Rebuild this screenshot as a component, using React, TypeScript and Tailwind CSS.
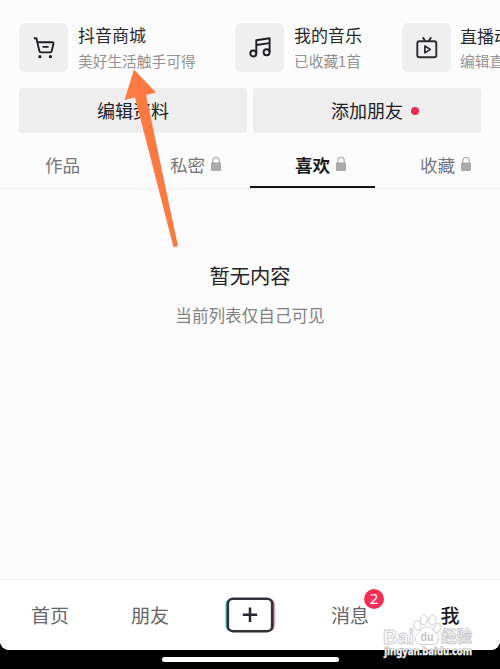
import React from "react";

function CartIcon() {
  return (
    <svg width="24" height="24" viewBox="0 0 24 24" fill="none" stroke="#1d1d22" strokeWidth="1.9" strokeLinecap="round" strokeLinejoin="round">
      <path d="M2.6 2.2H4.4l.9 3.9 2.1 8.9c.2 1 .7 1.4 1.6 1.4h9.1c.9 0 1.4-.4 1.6-1.3l1.7-7.3c.2-1-.2-1.6-1.2-1.6H5.3" />
      <path d="M11.1 10.9h4.9" strokeWidth="1.6" />
      <circle cx="7.9" cy="20.7" r="1.6" fill="#1d1d22" stroke="none" />
      <circle cx="18.4" cy="20.7" r="1.6" fill="#1d1d22" stroke="none" />
    </svg>
  );
}

function MusicIcon() {
  return (
    <svg width="24" height="24" viewBox="0 0 24 24" fill="none" stroke="#1d1d22" strokeWidth="1.9" strokeLinejoin="round">
      <circle cx="5.3" cy="17.5" r="3" />
      <circle cx="18.6" cy="16.3" r="3" />
      <path d="M8.3 17.5V4.2L21.6 2.3v14M8.3 9l13.3-1.9" />
    </svg>
  );
}

function LiveIcon() {
  return (
    <svg width="24" height="24" viewBox="0 0 24 24" fill="none" stroke="#2b2b31" strokeWidth="1.9" strokeLinecap="round" strokeLinejoin="round">
      <rect x="2.3" y="5.3" width="19" height="16" rx="2" />
      <path d="M8.1 1.9l2 2.8M15.8 1.9l-2 2.8" />
      <path d="M9.9 10v6.8l5.4-3.4z" strokeWidth="1.7" />
    </svg>
  );
}

function Lock() {
  return (
    <svg width="12" height="16" viewBox="0 0 12 16" fill="none">
      <path d="M2.8 7V4.6a3.2 3.2 0 0 1 6.4 0V7" stroke="#b4b4b6" strokeWidth="1.4" />
      <rect x="1" y="6.5" width="10" height="8.5" rx="0.9" fill="#aaaaac" />
    </svg>
  );
}

function Entry({ icon, title, sub, width, tight }: { icon: React.ReactNode; title: string; sub: string; width: string; tight?: boolean }) {
  return (
    <div className={"flex shrink-0 " + width}>
      <div className="flex h-[49px] w-[49px] shrink-0 items-center justify-center rounded-md bg-[#f0eff0]">{icon}</div>
      <div className={"whitespace-nowrap " + (tight ? "ml-[9px]" : "ml-[10px]")}>
        <div className={"text-[17px] text-[#29292e] " + (tight ? "leading-[25px]" : "leading-[23px]")}>{title}</div>
        <div className={"text-[14.7px] text-[#929295] " + (tight ? "leading-[25px]" : "leading-[30px]")}>{sub}</div>
      </div>
    </div>
  );
}

function Tab({ label, locked, active }: { label: string; locked?: boolean; active?: boolean }) {
  return (
    <div className={"flex h-full items-start pt-[19px] " + (locked ? "pl-[45px] " : "justify-center ") + (active ? "border-b-2 border-[#141418]" : "")}>
      <span className={"text-[17.6px] leading-[25px] whitespace-nowrap " + (active ? "font-bold text-[#1b1b20]" : "text-[#77777b]")}>{label}</span>
      {locked && (
        <span className="mt-[4px] ml-[5px]">
          <Lock />
        </span>
      )}
    </div>
  );
}

function Watermark() {
  return (
    <svg className="absolute top-[610px] left-[380px]" width="96" height="50" viewBox="0 0 96 50">
      <g fill="#ffffff" fillOpacity="0.75" stroke="#cbcbcd" strokeWidth="0.9">
        <text x="3" y="33.5" fontSize="21" textLength="31" lengthAdjust="spacingAndGlyphs" fontWeight="bold" fontFamily="Liberation Sans, Arial, sans-serif">Bai</text>
        <ellipse cx="37.5" cy="15.5" rx="3.6" ry="4.8" transform="rotate(-15 37.5 15.5)" />
        <ellipse cx="43.9" cy="9.6" rx="3.6" ry="5" />
        <ellipse cx="52.4" cy="9.8" rx="3.6" ry="5" transform="rotate(12 52.4 9.8)" />
        <ellipse cx="57.4" cy="18" rx="3.4" ry="4.7" transform="rotate(20 57.4 18)" />
        <path d="M47.5 16.5c4.5 0 6 4.5 9 7.5 4.5 4.5 1.5 10.5-3.5 10.5H41c-6 0-7.5-6.5-3.5-10.5 3.5-3.5 5-7.5 10-7.5z" />
        <text x="61" y="31.8" fontSize="15.5" textLength="31" lengthAdjust="spacingAndGlyphs" fontWeight="bold" fontFamily="Noto Sans CJK SC, sans-serif">经验</text>
      </g>
      <text x="40.5" y="31.3" fontSize="13" fontWeight="bold" textLength="13" lengthAdjust="spacingAndGlyphs" fill="#c6c6c8" fontFamily="Liberation Sans, Arial, sans-serif">du</text>
      <text x="4.2" y="45" fontSize="10.2" fontWeight="bold" textLength="88" lengthAdjust="spacingAndGlyphs" fill="#f5f5f5" stroke="#8a8a8a" strokeWidth="0.8" paintOrder="stroke" fontFamily="Noto Sans, sans-serif">jingyan.baidu.com</text>
    </svg>
  );
}

export default function App() {
  return (
    <div className="relative flex h-[669px] w-[500px] flex-col overflow-hidden bg-black font-['Noto_Sans_CJK_SC',sans-serif]">
      <main className="flex flex-1 flex-col overflow-hidden rounded-b-[9px] bg-[#fdfcfd]">
        <div className="flex h-[88px] shrink-0 overflow-hidden pt-[23px] pl-[19px]">
          <Entry icon={<CartIcon />} title="抖音商城" sub="美好生活触手可得" width="w-[216px]" />
          <Entry icon={<MusicIcon />} title="我的音乐" sub="已收藏1首" width="w-[167px]" />
          <Entry icon={<LiveIcon />} title="直播动态" sub="编辑直播动态" width="w-[180px]" tight />
        </div>
        <div className="grid h-[45px] shrink-0 grid-cols-2 gap-[6px] px-[19px] text-[18px] text-[#202025]">
          <div className="flex items-center justify-center rounded-[3px] bg-[#efeeef]">编辑资料</div>
          <div className="flex items-center justify-center gap-2 rounded-[3px] bg-[#efeeef] pl-4">
            添加朋友
            <span className="h-2 w-2 rounded-full bg-[#f02c52]" />
          </div>
        </div>
        <div className="grid h-[56px] shrink-0 grid-cols-4 border-b border-[#f1f0f1]">
          <Tab label="作品" />
          <Tab label="私密" locked />
          <Tab label="喜欢" locked active />
          <Tab label="收藏" locked />
        </div>
        <div className="flex flex-1 flex-col items-center pt-[70px]">
          <div className="text-[20.3px] leading-8 text-[#232327]">暂无内容</div>
          <div className="mt-[10px] text-[16.6px] leading-[28px] text-[#818184]">当前列表仅自己可见</div>
        </div>
        <nav className="grid h-[71px] shrink-0 grid-cols-5 border-t border-[#f1f1f2] bg-white text-[19px] text-[#65656a]">
          <div className="flex items-center justify-center">首页</div>
          <div className="flex items-center justify-center">朋友</div>
          <div className="flex items-center justify-center">
            <svg width="52" height="38" viewBox="0 0 52 38" fill="none">
              <rect x="1.5" y="2.2" width="44" height="33.6" rx="6" fill="#3fc2c8" />
              <rect x="6.5" y="2.2" width="44" height="33.6" rx="6" fill="#e0486a" />
              <rect x="3.9" y="2.8" width="44.2" height="32.4" rx="5" fill="#ffffff" stroke="#303139" strokeWidth="2.5" />
              <path d="M18.8 18.8h14.4M26 11.6V26" stroke="#26272e" strokeWidth="2.5" />
            </svg>
          </div>
          <div className="flex items-center justify-center">
            <span className="relative">
              消息
              <span className="absolute -top-[12px] -right-[15px] flex h-5 w-5 items-center justify-center rounded-full bg-[#f72f57] font-['Noto_Sans'] text-[15px] leading-none text-white">2</span>
            </span>
          </div>
          <div className="flex items-center justify-center font-medium text-[#19191e]">我</div>
        </nav>
      </main>
      <footer className="flex h-[19px] shrink-0 justify-center pt-[7px]">
        <div className="h-[5px] w-[177px] rounded-full bg-white" />
      </footer>
      <svg className="absolute top-[65px] left-[115px]" width="70" height="190" viewBox="0 0 70 190">
        <path d="M19 4.5L41 27.5L31 30L63 181.3L58.5 182.3L20 32.5L9.5 35Z" fill="#fd7b43" />
      </svg>
      <Watermark />
    </div>
  );
}
